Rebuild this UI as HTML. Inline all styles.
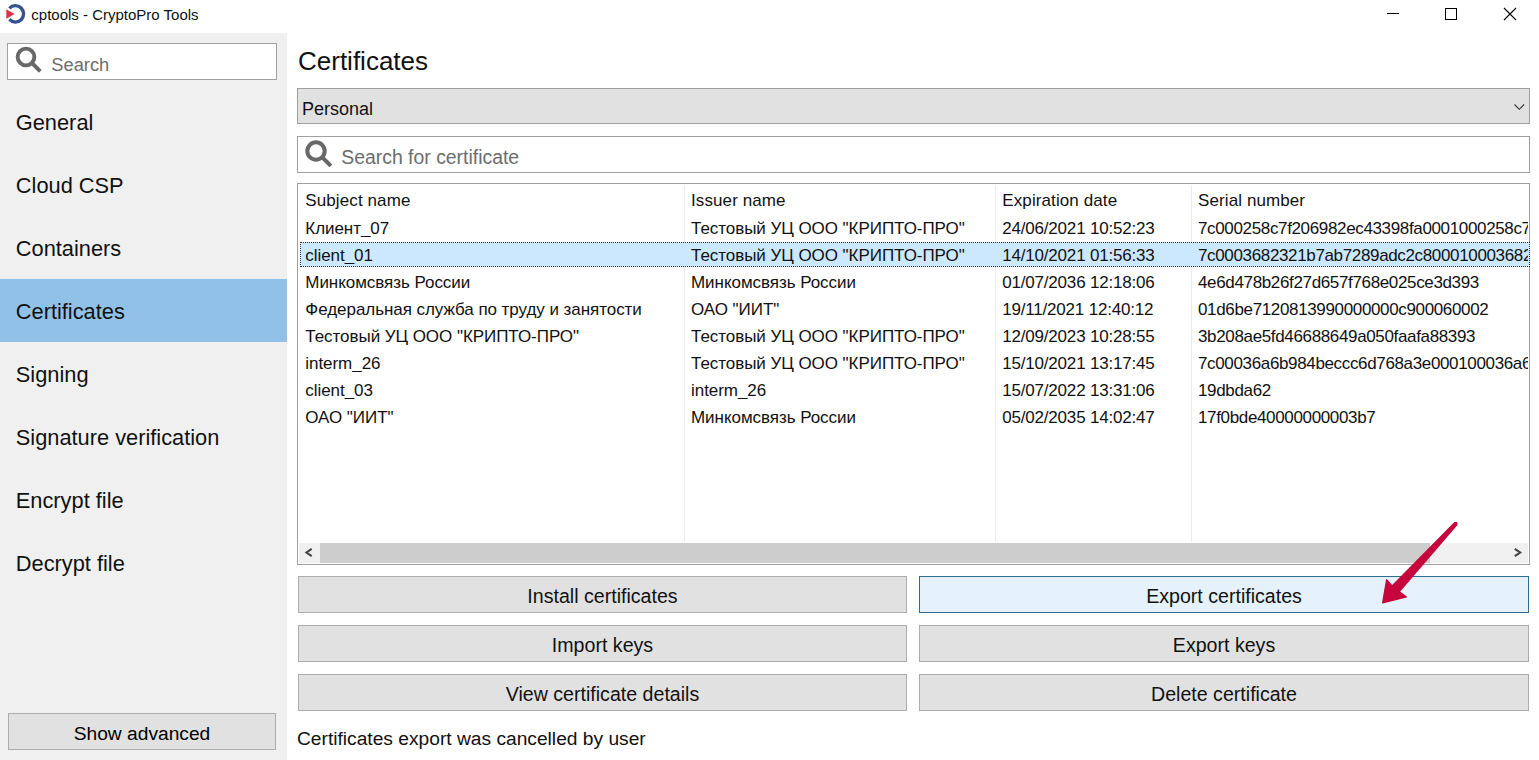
<!DOCTYPE html>
<html><head><meta charset="utf-8"><style>
html,body{margin:0;padding:0;width:1539px;height:760px;overflow:hidden;background:#fff;position:relative}
.t{position:absolute;font-family:"Liberation Sans",sans-serif;line-height:1;white-space:nowrap}
.r{position:absolute;box-sizing:content-box}
</style></head><body>
<svg class="r" style="left:0;top:0" width="34" height="30" viewBox="0 0 34 30">
<path d="M9.4 8.26 A8.2 8.2 0 1 1 9.4 19.44" fill="none" stroke="#34528d" stroke-width="3.3"/>
<polygon points="6.3,9.2 14.6,14 6.3,18.8" fill="#d9334a"/>
</svg>
<div class="t" style="left:31.3px;top:6.80px;font-size:15px;color:#111;">cptools - CryptoPro Tools</div>
<svg class="r" style="left:1380px;top:0" width="159" height="30" viewBox="0 0 159 30">
<line x1="7" y1="13.5" x2="19" y2="13.5" stroke="#000" stroke-width="1"/>
<rect x="65.5" y="8.5" width="11" height="11" fill="none" stroke="#000" stroke-width="1"/>
<path d="M124 8 L136 20 M136 8 L124 20" stroke="#000" stroke-width="1.1" fill="none"/>
</svg>
<div class="r" style="left:0px;top:33px;width:287px;height:727px;background:#f0f0f0"></div>
<div class="r" style="left:7px;top:43px;width:268px;height:35px;background:#fff;border:1px solid #a0a0a0"></div>
<svg class="r" style="left:11.7px;top:43.1px" width="34" height="34" viewBox="0 0 34 34">
<circle cx="14" cy="14" r="8.35" fill="none" stroke="#686868" stroke-width="3.90"/>
<line x1="20.60" y1="20.60" x2="28.30" y2="28.30" stroke="#686868" stroke-width="4.00"/>
</svg>
<div class="t" style="left:51.3px;top:56.11px;font-size:18.3px;color:#6d6d6d;">Search</div>
<div class="t" style="left:15.8px;top:111.55px;font-size:21.8px;color:#111;">General</div>
<div class="t" style="left:15.8px;top:174.55px;font-size:21.8px;color:#111;">Cloud CSP</div>
<div class="t" style="left:15.8px;top:237.55px;font-size:21.8px;color:#111;">Containers</div>
<div class="r" style="left:0px;top:279px;width:287px;height:63px;background:#91c1e7"></div>
<div class="t" style="left:15.8px;top:300.55px;font-size:21.8px;color:#111;">Certificates</div>
<div class="t" style="left:15.8px;top:363.55px;font-size:21.8px;color:#111;">Signing</div>
<div class="t" style="left:15.8px;top:426.55px;font-size:21.8px;color:#111;">Signature verification</div>
<div class="t" style="left:15.8px;top:489.55px;font-size:21.8px;color:#111;">Encrypt file</div>
<div class="t" style="left:15.8px;top:552.55px;font-size:21.8px;color:#111;">Decrypt file</div>
<div class="r" style="left:8px;top:713px;width:266px;height:35px;background:#e1e1e1;border:1px solid #adadad"></div>
<div class="t" style="left:8px;top:724.25px;font-size:19.2px;color:#000;width:268px;text-align:center;">Show advanced</div>
<div class="t" style="left:298px;top:47.99px;font-size:26px;color:#111;">Certificates</div>
<div class="r" style="left:297px;top:88px;width:1231px;height:34px;background:#e1e1e1;border:1px solid #a0a0a0"></div>
<div class="t" style="left:302px;top:99.76px;font-size:18px;color:#111;">Personal</div>
<svg class="r" style="left:1510px;top:98.6px" width="18" height="16"><path d="M4.5 5.5 L9.3 10.3 L14.1 5.5" fill="none" stroke="#333" stroke-width="1.1"/></svg>
<div class="r" style="left:297px;top:136px;width:1231px;height:35px;background:#fff;border:1px solid #a0a0a0"></div>
<svg class="r" style="left:301.6px;top:137.0px" width="34" height="34" viewBox="0 0 34 34">
<circle cx="14" cy="14" r="8.68" fill="none" stroke="#686868" stroke-width="4.06"/>
<line x1="20.86" y1="20.86" x2="28.87" y2="28.87" stroke="#686868" stroke-width="4.16"/>
</svg>
<div class="t" style="left:341.3px;top:147.78px;font-size:19.4px;color:#6d6d6d;">Search for certificate</div>
<div class="r" style="left:297px;top:183px;width:1231px;height:380px;background:#fff;border:1px solid #a0a0a0"></div>
<div class="r" style="left:684px;top:185px;width:1px;height:357px;background:#ebebeb"></div>
<div class="r" style="left:995px;top:185px;width:1px;height:357px;background:#ebebeb"></div>
<div class="r" style="left:1191px;top:185px;width:1px;height:357px;background:#ebebeb"></div>
<div class="r" style="left:300px;top:242px;width:1228px;height:23px;background:#cce8ff;border:1px dotted #333;box-sizing:content-box"></div>
<div class="t" style="left:305.3px;top:191.61px;font-size:17px;color:#111;letter-spacing:0.1px;width:376px;overflow:hidden;">Subject name</div>
<div class="t" style="left:691.0px;top:191.61px;font-size:17px;color:#111;letter-spacing:0.1px;width:302px;overflow:hidden;">Issuer name</div>
<div class="t" style="left:1002.3px;top:191.61px;font-size:17px;color:#111;letter-spacing:0.1px;width:186px;overflow:hidden;">Expiration date</div>
<div class="t" style="left:1198.0px;top:191.61px;font-size:17px;color:#111;letter-spacing:0.1px;width:330px;overflow:hidden;">Serial number</div>
<div class="t" style="left:305.3px;top:219.61px;font-size:17px;color:#111;letter-spacing:-0.05px;width:376px;overflow:hidden;">Клиент_07</div>
<div class="t" style="left:691.0px;top:219.61px;font-size:17px;color:#111;letter-spacing:-0.05px;width:302px;overflow:hidden;">Тестовый УЦ ООО &quot;КРИПТО-ПРО&quot;</div>
<div class="t" style="left:1002.3px;top:219.61px;font-size:17px;color:#111;letter-spacing:-0.2px;width:186px;overflow:hidden;">24/06/2021 10:52:23</div>
<div class="t" style="left:1198.0px;top:219.61px;font-size:17px;color:#111;letter-spacing:-0.35px;width:330px;overflow:hidden;">7c000258c7f206982ec43398fa0001000258c7</div>
<div class="t" style="left:305.3px;top:246.61px;font-size:17px;color:#111;letter-spacing:-0.05px;width:376px;overflow:hidden;">client_01</div>
<div class="t" style="left:691.0px;top:246.61px;font-size:17px;color:#111;letter-spacing:-0.05px;width:302px;overflow:hidden;">Тестовый УЦ ООО &quot;КРИПТО-ПРО&quot;</div>
<div class="t" style="left:1002.3px;top:246.61px;font-size:17px;color:#111;letter-spacing:-0.2px;width:186px;overflow:hidden;">14/10/2021 01:56:33</div>
<div class="t" style="left:1198.0px;top:246.61px;font-size:17px;color:#111;letter-spacing:-0.35px;width:330px;overflow:hidden;">7c0003682321b7ab7289adc2c800010003682</div>
<div class="t" style="left:305.3px;top:273.61px;font-size:17px;color:#111;letter-spacing:-0.05px;width:376px;overflow:hidden;">Минкомсвязь России</div>
<div class="t" style="left:691.0px;top:273.61px;font-size:17px;color:#111;letter-spacing:-0.05px;width:302px;overflow:hidden;">Минкомсвязь России</div>
<div class="t" style="left:1002.3px;top:273.61px;font-size:17px;color:#111;letter-spacing:-0.2px;width:186px;overflow:hidden;">01/07/2036 12:18:06</div>
<div class="t" style="left:1198.0px;top:273.61px;font-size:17px;color:#111;letter-spacing:-0.35px;width:330px;overflow:hidden;">4e6d478b26f27d657f768e025ce3d393</div>
<div class="t" style="left:305.3px;top:300.61px;font-size:17px;color:#111;letter-spacing:-0.05px;width:376px;overflow:hidden;">Федеральная служба по труду и занятости</div>
<div class="t" style="left:691.0px;top:300.61px;font-size:17px;color:#111;letter-spacing:-0.05px;width:302px;overflow:hidden;">ОАО &quot;ИИТ&quot;</div>
<div class="t" style="left:1002.3px;top:300.61px;font-size:17px;color:#111;letter-spacing:-0.2px;width:186px;overflow:hidden;">19/11/2021 12:40:12</div>
<div class="t" style="left:1198.0px;top:300.61px;font-size:17px;color:#111;letter-spacing:-0.35px;width:330px;overflow:hidden;">01d6be7120813990000000c900060002</div>
<div class="t" style="left:305.3px;top:327.61px;font-size:17px;color:#111;letter-spacing:-0.05px;width:376px;overflow:hidden;">Тестовый УЦ ООО &quot;КРИПТО-ПРО&quot;</div>
<div class="t" style="left:691.0px;top:327.61px;font-size:17px;color:#111;letter-spacing:-0.05px;width:302px;overflow:hidden;">Тестовый УЦ ООО &quot;КРИПТО-ПРО&quot;</div>
<div class="t" style="left:1002.3px;top:327.61px;font-size:17px;color:#111;letter-spacing:-0.2px;width:186px;overflow:hidden;">12/09/2023 10:28:55</div>
<div class="t" style="left:1198.0px;top:327.61px;font-size:17px;color:#111;letter-spacing:-0.35px;width:330px;overflow:hidden;">3b208ae5fd46688649a050faafa88393</div>
<div class="t" style="left:305.3px;top:354.61px;font-size:17px;color:#111;letter-spacing:-0.05px;width:376px;overflow:hidden;">interm_26</div>
<div class="t" style="left:691.0px;top:354.61px;font-size:17px;color:#111;letter-spacing:-0.05px;width:302px;overflow:hidden;">Тестовый УЦ ООО &quot;КРИПТО-ПРО&quot;</div>
<div class="t" style="left:1002.3px;top:354.61px;font-size:17px;color:#111;letter-spacing:-0.2px;width:186px;overflow:hidden;">15/10/2021 13:17:45</div>
<div class="t" style="left:1198.0px;top:354.61px;font-size:17px;color:#111;letter-spacing:-0.35px;width:330px;overflow:hidden;">7c00036a6b984beccc6d768a3e000100036a6</div>
<div class="t" style="left:305.3px;top:381.61px;font-size:17px;color:#111;letter-spacing:-0.05px;width:376px;overflow:hidden;">client_03</div>
<div class="t" style="left:691.0px;top:381.61px;font-size:17px;color:#111;letter-spacing:-0.05px;width:302px;overflow:hidden;">interm_26</div>
<div class="t" style="left:1002.3px;top:381.61px;font-size:17px;color:#111;letter-spacing:-0.2px;width:186px;overflow:hidden;">15/07/2022 13:31:06</div>
<div class="t" style="left:1198.0px;top:381.61px;font-size:17px;color:#111;letter-spacing:-0.35px;width:330px;overflow:hidden;">19dbda62</div>
<div class="t" style="left:305.3px;top:408.61px;font-size:17px;color:#111;letter-spacing:-0.05px;width:376px;overflow:hidden;">ОАО &quot;ИИТ&quot;</div>
<div class="t" style="left:691.0px;top:408.61px;font-size:17px;color:#111;letter-spacing:-0.05px;width:302px;overflow:hidden;">Минкомсвязь России</div>
<div class="t" style="left:1002.3px;top:408.61px;font-size:17px;color:#111;letter-spacing:-0.2px;width:186px;overflow:hidden;">05/02/2035 14:02:47</div>
<div class="t" style="left:1198.0px;top:408.61px;font-size:17px;color:#111;letter-spacing:-0.35px;width:330px;overflow:hidden;">17f0bde40000000003b7</div>
<div class="r" style="left:299px;top:543px;width:1229px;height:20px;background:#f0f0f0"></div>
<div class="r" style="left:320px;top:543px;width:1110px;height:20px;background:#cdcdcd"></div>
<svg class="r" style="left:299px;top:543px" width="21" height="20"><path d="M12.7 5.8 L7.5 9.5 L12.7 13.2" fill="none" stroke="#444" stroke-width="2.1"/></svg>
<svg class="r" style="left:1507px;top:543px" width="21" height="20"><path d="M7.8 5.8 L13.2 9.5 L7.8 13.2" fill="none" stroke="#444" stroke-width="2.1"/></svg>
<div class="r" style="left:298px;top:576px;width:607px;height:35px;background:#e1e1e1;border:1px solid #adadad"></div>
<div class="t" style="left:298px;top:587.41px;font-size:19.6px;color:#111;width:609px;text-align:center;">Install certificates</div>
<div class="r" style="left:919px;top:576px;width:608px;height:35px;background:#e5f1fb;border:1px solid #2f6d93"></div>
<div class="t" style="left:919px;top:587.41px;font-size:19.6px;color:#111;width:610px;text-align:center;">Export certificates</div>
<div class="r" style="left:298px;top:625px;width:607px;height:35px;background:#e1e1e1;border:1px solid #adadad"></div>
<div class="t" style="left:298px;top:636.41px;font-size:19.6px;color:#111;width:609px;text-align:center;">Import keys</div>
<div class="r" style="left:919px;top:625px;width:608px;height:35px;background:#e1e1e1;border:1px solid #adadad"></div>
<div class="t" style="left:919px;top:636.41px;font-size:19.6px;color:#111;width:610px;text-align:center;">Export keys</div>
<div class="r" style="left:298px;top:674px;width:607px;height:35px;background:#e1e1e1;border:1px solid #adadad"></div>
<div class="t" style="left:298px;top:685.41px;font-size:19.6px;color:#111;width:609px;text-align:center;">View certificate details</div>
<div class="r" style="left:919px;top:674px;width:608px;height:35px;background:#e1e1e1;border:1px solid #adadad"></div>
<div class="t" style="left:919px;top:685.41px;font-size:19.6px;color:#111;width:610px;text-align:center;">Delete certificate</div>
<div class="t" style="left:297px;top:728.75px;font-size:19.2px;color:#111;">Certificates export was cancelled by user</div>
<svg class="r" style="left:0;top:0" width="1539" height="760"><path d="M1454.60 522.76 L1392.12 585.93 L1386.63 579.64 L1382.68 602.94 L1406.43 596.96 L1399.35 591.65 L1456.81 524.80 L1456.72 522.68 Z" fill="#c5053c" stroke="#c5053c" stroke-width="1.3" stroke-linejoin="round"/></svg>
</body></html>
